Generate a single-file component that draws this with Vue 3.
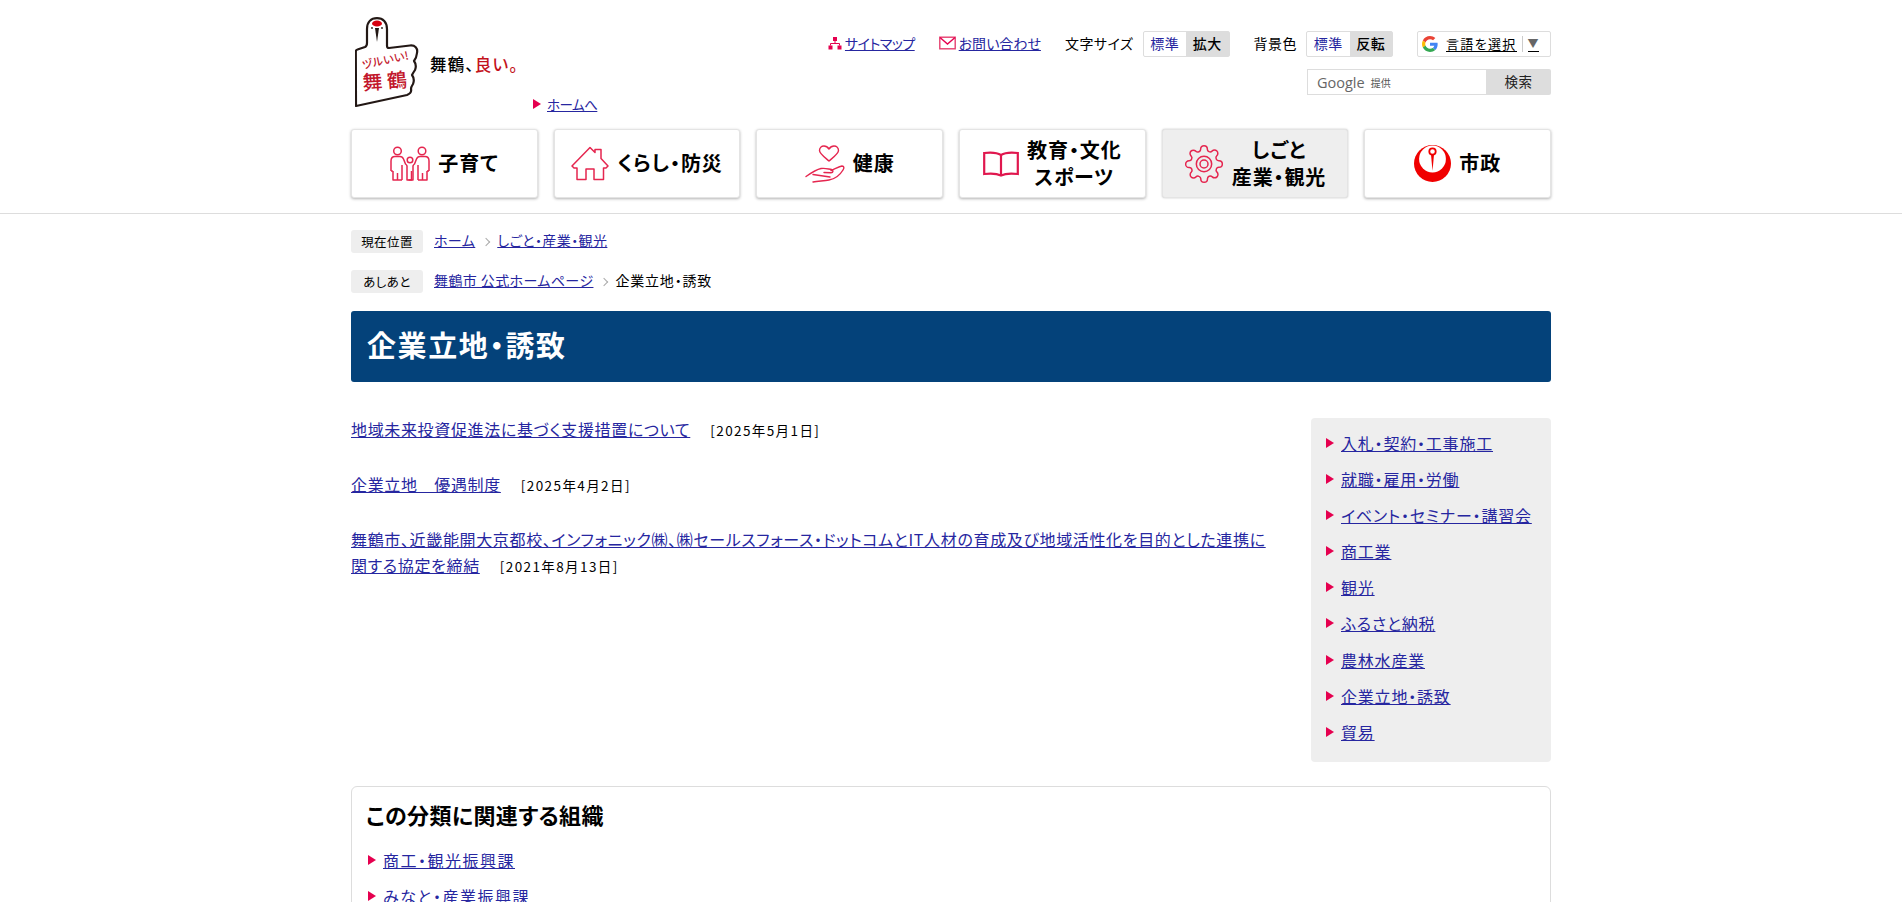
<template>
  <div class="page">
    <header class="site-header">
      <div class="wrap">
        <div class="head-top">
          <div class="brand">
            <svg class="logo" viewBox="0 0 64 92" xmlns="http://www.w3.org/2000/svg">
              <path d="M1 89 L0.8 34.5 Q0.8 33 2.5 32.5 L10 30 Q12 29 12 26 L12 12 C12 5 16 1.2 22 1.2 C28 1.2 32 5 32 12 L32 29 Q32 31 34 31 L55 28.5 C60 28 63 31 62 36 Q61.5 41 59 44 Q62 48 60 53 Q58 56 57 58 Q60 62 58 67 Q56 70 56 72 Q57 76 52 78 Z" fill="#fff" stroke="#231815" stroke-width="2.2" stroke-linejoin="round"/>
              <ellipse cx="22" cy="6.5" rx="5" ry="3" fill="#d7000f"/>
              <path d="M20 11 L24 11 L22 25 Z" fill="#231815"/>
              <circle cx="17" cy="11" r="0.9" fill="#231815"/>
              <circle cx="27" cy="11" r="0.9" fill="#231815"/>
              <text class="logo-small" x="8" y="52" transform="rotate(-12 8 52)">ヅルいい!</text>
              <text class="logo-big" x="8" y="73" transform="rotate(-4 8 73)">舞 鶴</text>
            </svg>
            <div class="brand-side">
              <p class="catch">舞鶴、<span class="catch-red">良い。</span></p>
              <a class="home-link arrow-item" href="#">ホームへ</a>
            </div>
          </div>

          <div class="tools">
            <div class="tool-row">
              <a class="tool-link sitemap" href="#">
                <svg class="tool-icon" viewBox="0 0 14 14">
                  <rect x="5" y="1" width="4" height="4" fill="#e5004f"/>
                  <rect x="0.5" y="9.5" width="4" height="4" fill="#e5004f"/>
                  <rect x="9.5" y="9.5" width="4" height="4" fill="#e5004f"/>
                  <path d="M7 5v2.5M2.5 9.5v-2h9v2" fill="none" stroke="#e5004f"/>
                </svg>
                <span>サイトマップ</span>
              </a>
              <a class="tool-link mail" href="#">
                <svg class="tool-icon wide" viewBox="0 0 17 14">
                  <rect x="0.8" y="1.2" width="15.4" height="11.6" fill="none" stroke="#e5406f" stroke-width="1.4"/>
                  <path d="M1 1.5 L8.5 8 L16 1.5" fill="none" stroke="#e5004f" stroke-width="1.4"/>
                </svg>
                <span>お問い合わせ</span>
              </a>
              <span class="tool-label size-label">文字サイズ</span>
              <div class="toggle">
                <a class="toggle-off" href="#">標準</a>
                <span class="toggle-on">拡大</span>
              </div>
              <span class="tool-label bg-label">背景色</span>
              <div class="toggle">
                <a class="toggle-off" href="#">標準</a>
                <span class="toggle-on">反転</span>
              </div>
              <div class="translate">
                <svg class="g-icon" viewBox="0 0 48 48">
                  <path fill="#EA4335" d="M24 9.5c3.54 0 6.71 1.22 9.21 3.6l6.85-6.85C35.9 2.38 30.47 0 24 0 14.62 0 6.51 5.38 2.56 13.22l7.98 6.19C12.43 13.72 17.74 9.5 24 9.5z"/>
                  <path fill="#4285F4" d="M46.98 24.55c0-1.57-.15-3.09-.38-4.55H24v9.02h12.94c-.58 2.96-2.26 5.48-4.78 7.18l7.73 6c4.51-4.18 7.09-10.36 7.09-17.65z"/>
                  <path fill="#FBBC05" d="M10.53 28.59c-.48-1.45-.76-2.99-.76-4.59s.27-3.14.76-4.59l-7.98-6.19C.92 16.46 0 20.12 0 24c0 3.88.92 7.54 2.56 10.78l7.97-6.19z"/>
                  <path fill="#34A853" d="M24 48c6.48 0 11.93-2.13 15.89-5.81l-7.73-6c-2.15 1.45-4.92 2.3-8.16 2.3-6.26 0-11.57-4.22-13.47-9.91l-7.98 6.19C6.51 42.62 14.62 48 24 48z"/>
                </svg>
                <span class="translate-text">言語を選択</span>
                <span class="translate-sep"></span>
                <span class="translate-caret">▼</span>
              </div>
            </div>
            <div class="search">
              <div class="search-box"><span class="google-word">Google</span><span class="google-by">提供</span></div>
              <button class="search-btn" type="button">検索</button>
            </div>
          </div>
        </div>

        <nav class="global-nav">
          <a v-for="item in navItems" :key="item.key" href="#" class="nav-item" :class="{ active: item.active }">
            <svg v-if="item.key === 'family'" class="nav-icon" style="width:40px;height:36px" viewBox="0 0 40 36" fill="none" stroke="#e5264f" stroke-width="1.5" stroke-linejoin="round">
              <circle cx="7.5" cy="5" r="3.8"/>
              <circle cx="32" cy="5" r="3.8"/>
              <circle cx="20" cy="14" r="2.8"/>
              <path d="M1 25 V15 Q1 10.5 5 10.5 H10 Q12.5 10.5 13.5 13 L15.5 18 Q16.8 19 17 20 V34 H21.5 V25 M12 34 H7.5 V27 M2.8 25 H1 M3 25 V34 H7.5"/>
              <path d="M39 25 V15 Q39 10.5 35 10.5 H30 Q27.5 10.5 26.5 13 L24.5 18 Q23.2 19 23 20 V34 H18.5 M28 34 H32.5 V27 M37 25 H39 M37 25 V34 H32.5"/>
              <path d="M12 19 V34 M28 19 V34"/>
            </svg>
            <svg v-else-if="item.key === 'house'" class="nav-icon" style="width:38px;height:35px" viewBox="0 0 38 35" fill="none" stroke="#e5264f" stroke-width="1.5" stroke-linejoin="round">
              <path d="M1 20 L19 1.5 L24 6.5 V3.5 H30 V12.5 L37 20 L35 22 H32.5 V33.5 H23 V23 H15 V33.5 H6 V22 H3 Z"/>
            </svg>
            <svg v-else-if="item.key === 'heart'" class="nav-icon" style="width:40px;height:38px" viewBox="0 0 40 38" fill="none" stroke="#e5264f" stroke-width="1.4" stroke-linecap="round" stroke-linejoin="round">
              <path d="M25 16 C19 11 15.5 8.5 15.5 5.5 C15.5 2.8 17.5 1 20 1 C22.5 1 24 2.5 25 4 C26 2.5 27.5 1 30 1 C32.5 1 34.5 2.8 34.5 5.5 C34.5 8.5 31 11 25 16 Z" transform="translate(-1 0)"/>
              <path d="M1 31.5 C6 28 11 24.5 16 23.5 C20 22.8 23 24 26.5 24.5 C28.5 25 28.5 27.8 26 27.8 L19 27.5"/>
              <path d="M26 25.5 C30 24 34 21.5 37 21 C39 21 39.5 23 38 25 C35 30 30 34 24 35 C19 36 14 36 8 37"/>
              <path d="M8 29.5 L25 32"/>
            </svg>
            <svg v-else-if="item.key === 'book'" class="nav-icon" style="width:36px;height:26px" viewBox="0 0 36 26" fill="none" stroke="#e0174e" stroke-width="2.2">
              <path d="M18 4 C14 1.5 8 1.2 1.2 2 V23 C8 22.2 14 22.5 18 24.5 C22 22.5 28 22.2 34.8 23 V2 C28 1.2 22 1.5 18 4 Z M18 4 V24.5"/>
            </svg>
            <svg v-else-if="item.key === 'gear'" class="nav-icon" style="width:40px;height:40px" viewBox="0 0 24 24" fill="none" stroke="#e5264f" stroke-width="0.9" stroke-linejoin="round">
              <path d="M19.4 15a1.65 1.65 0 00.33 1.82l.06.06a2 2 0 010 2.83 2 2 0 01-2.83 0l-.06-.06a1.65 1.65 0 00-1.82-.33 1.65 1.65 0 00-1 1.51V21a2 2 0 01-2 2 2 2 0 01-2-2v-.09A1.65 1.65 0 009 19.4a1.65 1.65 0 00-1.82.33l-.06.06a2 2 0 01-2.83 0 2 2 0 010-2.83l.06-.06a1.65 1.65 0 00.33-1.82 1.65 1.65 0 00-1.51-1H3a2 2 0 01-2-2 2 2 0 012-2h.09A1.65 1.65 0 004.6 9a1.65 1.65 0 00-.33-1.82l-.06-.06a2 2 0 010-2.83 2 2 0 012.83 0l.06.06a1.65 1.65 0 001.82.33H9a1.65 1.65 0 001-1.51V3a2 2 0 012-2 2 2 0 012 2v.09a1.65 1.65 0 001 1.51 1.65 1.65 0 001.82-.33l.06-.06a2 2 0 012.83 0 2 2 0 010 2.83l-.06.06a1.65 1.65 0 00-.33 1.82V9a1.65 1.65 0 001.51 1H21a2 2 0 012 2 2 2 0 01-2 2h-.09a1.65 1.65 0 00-1.51 1z"/>
              <circle cx="12" cy="12" r="4.6"/>
              <circle cx="12" cy="12" r="2.4"/>
            </svg>
            <svg v-else class="nav-icon" style="width:37px;height:37px" viewBox="0 0 37 37">
              <circle cx="18.5" cy="18.5" r="18.5" fill="#f00000"/>
              <circle cx="18.5" cy="14" r="13.4" fill="#fff"/>
              <circle cx="18.5" cy="6.5" r="3.2" fill="none" stroke="#f00000" stroke-width="1.8"/>
              <path d="M17 9.5 H20 L18.5 26 Z" fill="#f00000"/>
            </svg>
            <span class="nav-label">
              <template v-for="(line, i) in item.lines" :key="i">{{ line }}<br v-if="i < item.lines.length - 1" /></template>
            </span>
          </a>
        </nav>
      </div>
    </header>

    <main class="wrap main">
      <div class="crumb-row first">
        <span class="crumb-label">現在位置</span>
        <a class="crumb" href="#">ホーム</a>
        <span class="crumb-sep"></span>
        <a class="crumb" href="#">しごと・産業・観光</a>
      </div>
      <div class="crumb-row second">
        <span class="crumb-label">あしあと</span>
        <a class="crumb" href="#">舞鶴市 公式ホームページ</a>
        <span class="crumb-sep"></span>
        <span class="crumb crumb-current">企業立地・誘致</span>
      </div>

      <h1 class="page-title">企業立地・誘致</h1>

      <div class="content">
        <div class="articles">
          <p v-for="a in articles" :key="a.date" class="article">
            <a href="#">{{ a.title }}</a><span class="date">[{{ a.date }}]</span>
          </p>
        </div>
        <aside class="side">
          <ul>
            <li v-for="s in sideLinks" :key="s"><a class="arrow-item" href="#">{{ s }}</a></li>
          </ul>
        </aside>
      </div>

      <section class="related">
        <h2>この分類に関連する組織</h2>
        <ul>
          <li><a class="arrow-item" href="#">商工・観光振興課</a></li>
          <li><a class="arrow-item" href="#">みなと・産業振興課</a></li>
        </ul>
      </section>
    </main>
  </div>
</template>

<script setup>
const navItems = [
  { key: 'family', lines: ['子育て'] },
  { key: 'house', lines: ['くらし・防災'] },
  { key: 'heart', lines: ['健康'] },
  { key: 'book', lines: ['教育・文化', 'スポーツ'] },
  { key: 'gear', lines: ['しごと', '産業・観光'], active: true },
  { key: 'emblem', lines: ['市政'] }
]

const articles = [
  { title: '地域未来投資促進法に基づく支援措置について', date: '2025年5月1日' },
  { title: '企業立地　優遇制度', date: '2025年4月2日' },
  { title: '舞鶴市、近畿能開大京都校、インフォニック㈱、㈱セールスフォース・ドットコムとIT人材の育成及び地域活性化を目的とした連携に関する協定を締結', date: '2021年8月13日' }
]

const sideLinks = [
  '入札・契約・工事施工',
  '就職・雇用・労働',
  'イベント・セミナー・講習会',
  '商工業',
  '観光',
  'ふるさと納税',
  '農林水産業',
  '企業立地・誘致',
  '貿易'
]
</script>

<style>
html, body {
  margin: 0;
  background: #fff;
}
</style>

<style scoped>
.page {
  padding-right: 1px;
  font-family: "Noto Sans CJK JP", "Noto Sans", sans-serif;
  font-feature-settings: "palt";
  color: #000;
  font-size: 16px;
  letter-spacing: 0.8px;
}

a {
  color: #2626a0;
}

.wrap {
  width: 1200px;
  margin: 0 auto;
}

.site-header {
  height: 213px;
  border-bottom: 1px solid #ddd;
}

.head-top {
  height: 129px;
  display: flex;
  justify-content: space-between;
}

.brand {
  display: flex;
  padding: 17px 0 0 4px;
}

.logo {
  width: 64px;
  height: 92px;
}

.logo-small {
  font-size: 11px;
  font-weight: 500;
  fill: #c2162b;
  letter-spacing: 0.5px;
}

.logo-big {
  font-size: 20px;
  font-weight: 500;
  fill: #c2162b;
  letter-spacing: 0;
}

.brand-side {
  margin-left: 11px;
}

.catch {
  margin: 35px 0 0;
  font-size: 16.5px;
  line-height: 24px;
  font-weight: 500;
  letter-spacing: 1.2px;
}

.catch-red {
  color: #c3121c;
}

.home-link {
  display: inline-block;
  margin: 18px 0 0 103px;
  font-size: 13.5px;
  line-height: 20px;
  letter-spacing: -0.5px;
}

.arrow-item {
  position: relative;
  padding-left: 14px;
}

.arrow-item::before {
  content: "";
  position: absolute;
  left: 0;
  top: 50%;
  margin-top: -5px;
  border-left: 8px solid #e5004f;
  border-top: 5px solid transparent;
  border-bottom: 5px solid transparent;
}

.tools {
  display: flex;
  flex-direction: column;
  align-items: flex-end;
  padding-top: 31px;
}

.tool-row {
  display: flex;
  align-items: center;
  height: 26px;
  font-size: 14px;
  letter-spacing: 0.5px;
}

.tool-link {
  display: flex;
  align-items: center;
  gap: 3px;
  margin: 0 24px 2px 0;
  letter-spacing: 0;
}

.tool-link.sitemap {
  letter-spacing: -0.5px;
}

.tool-icon {
  width: 14px;
  height: 14px;
}

.tool-icon.wide {
  width: 17px;
}

.tool-label {
  color: #000;
  margin-bottom: 2px;
}

.size-label {
  margin-right: 9px;
}

.bg-label {
  margin: 0 9px 2px 24px;
}

.toggle {
  display: flex;
  width: 87px;
  height: 26px;
  box-sizing: border-box;
  border: 1px solid #ddd;
  border-radius: 2px;
  line-height: 22px;
  font-size: 14px;
  text-align: center;
}

.toggle-off,
.toggle-on {
  flex: 1;
  text-decoration: none;
}

.toggle-on {
  background: #ddd;
  font-weight: 500;
}

.translate {
  display: flex;
  align-items: center;
  width: 134px;
  height: 26px;
  box-sizing: border-box;
  margin-left: 24px;
  padding: 0 4px;
  border: 1px solid #ddd;
  border-radius: 2px;
  font-size: 13px;
}

.g-icon {
  width: 16px;
  height: 16px;
  margin-right: 8px;
}

.translate-text {
  border-bottom: 1px solid #000;
  line-height: 15px;
  letter-spacing: 1.3px;
}

.translate-sep {
  width: 1px;
  height: 16px;
  margin: 0 5px;
  background: #ccc;
}

.translate-caret {
  font-size: 11px;
  line-height: 15px;
  color: #666;
  border-bottom: 1px solid #000;
  letter-spacing: 0;
}

.search {
  display: flex;
  width: 244px;
  height: 26px;
  margin-top: 12px;
}

.search-box {
  flex: 1;
  display: flex;
  align-items: center;
  box-sizing: border-box;
  padding-left: 9px;
  border: 1px solid #ddd;
  border-right: 0;
}

.google-word {
  font-family: "Open Sans", sans-serif;
  font-size: 14.5px;
  color: #666;
  letter-spacing: 0;
}

.google-by {
  margin-left: 6px;
  font-size: 10px;
  color: #555;
  letter-spacing: 0;
}

.search-btn {
  width: 65px;
  border: 0;
  padding: 0 0 3px;
  background: #ddd;
  border-radius: 0 2px 2px 0;
  font: inherit;
  font-size: 13.5px;
  letter-spacing: 0.5px;
  color: #222;
}

.global-nav {
  display: grid;
  grid-template-columns: repeat(6, 1fr);
  gap: 16px;
}

.nav-item {
  height: 67px;
  display: flex;
  align-items: center;
  justify-content: center;
  gap: 8px;
  box-sizing: content-box;
  background: #fff;
  border: 1px solid #e4e4e4;
  border-radius: 3px;
  box-shadow: 0 1px 3px rgba(0, 0, 0, 0.3);
  color: #000;
  text-decoration: none;
}

.nav-item.active {
  background: #eee;
  box-shadow: 0 0 2px rgba(0, 0, 0, 0.25);
}

.nav-label {
  padding-bottom: 2px;
  font-size: 20px;
  font-weight: 700;
  line-height: 27px;
  text-align: center;
  letter-spacing: 0.9px;
}

.nav-icon {
  flex-shrink: 0;
}

.main {
  padding-top: 16px;
}

.crumb-row {
  display: flex;
  align-items: center;
  height: 23px;
  font-size: 14px;
  letter-spacing: 0.4px;
}

.crumb-row.first {
  margin-bottom: 17px;
}

.crumb-row.second {
  margin-bottom: 18px;
}

.crumb {
  margin-bottom: 4px;
}

.crumb-current {
  letter-spacing: 0.8px;
}

.crumb-label {
  width: 72px;
  margin-right: 11px;
  background: #eee;
  border-radius: 3px;
  text-align: center;
  font-size: 12.5px;
  line-height: 23px;
}

.crumb-sep {
  width: 5px;
  height: 5px;
  margin: 0 8px 0 8px;
  border-top: 1px solid #aaa;
  border-right: 1px solid #aaa;
  transform: rotate(45deg);
}

.page-title {
  margin: 0;
  height: 71px;
  padding-left: 16px;
  background: #04427a;
  border-radius: 3px;
  color: #fff;
  font-size: 29px;
  font-weight: 700;
  line-height: 67px;
  letter-spacing: 1.6px;
}

.content {
  display: flex;
  justify-content: space-between;
  margin-top: 36px;
}

.articles {
  width: 922px;
  margin-top: -2px;
  letter-spacing: 0.65px;
}

.article {
  margin: 0 0 28px;
  line-height: 26px;
}

.date {
  margin-left: 20px;
  font-size: 13.5px;
  letter-spacing: 1.4px;
}

.side {
  width: 240px;
  height: 344px;
  box-sizing: border-box;
  padding: 7px 0 0 15px;
  background: #eee;
  border-radius: 4px;
}

ul {
  list-style: none;
  margin: 0;
  padding: 0;
}

.side li {
  height: 36.1px;
  line-height: 36.1px;
}

.side .arrow-item {
  padding-left: 15px;
}

.related {
  margin-top: 24px;
  box-sizing: border-box;
  height: 220px;
  padding: 11px 14px 0;
  border: 1px solid #ddd;
  border-radius: 6px;
}

.related h2 {
  margin: 0 0 12px;
  font-size: 22px;
  line-height: 32px;
  font-weight: 700;
  letter-spacing: 0.4px;
}

.related li {
  height: 36px;
  line-height: 36px;
  padding-left: 2px;
  letter-spacing: 1.5px;
}

.related .arrow-item {
  padding-left: 15px;
}
</style>
